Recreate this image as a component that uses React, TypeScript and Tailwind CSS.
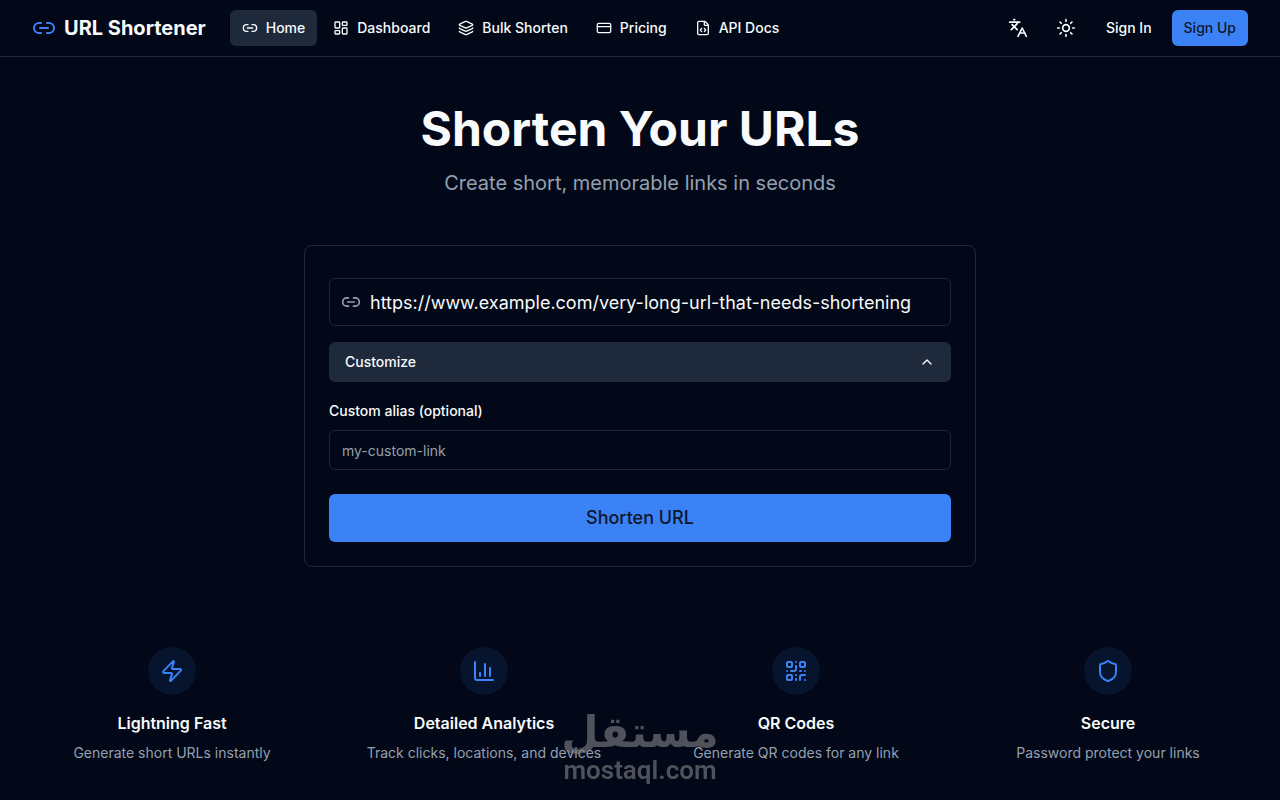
import { useState } from 'react';
import {
  ChartColumn,
  ChevronDown,
  ChevronUp,
  CreditCard,
  FileCode,
  Languages,
  Layers,
  LayoutDashboard,
  Link2,
  QrCode,
  Shield,
  Sun,
  Zap,
} from 'lucide-react';

const navItems = [
  { label: 'Home', icon: Link2 },
  { label: 'Dashboard', icon: LayoutDashboard },
  { label: 'Bulk Shorten', icon: Layers },
  { label: 'Pricing', icon: CreditCard },
  { label: 'API Docs', icon: FileCode },
];

const features = [
  { title: 'Lightning Fast', text: 'Generate short URLs instantly', icon: Zap },
  { title: 'Detailed Analytics', text: 'Track clicks, locations, and devices', icon: ChartColumn },
  { title: 'QR Codes', text: 'Generate QR codes for any link', icon: QrCode },
  { title: 'Secure', text: 'Password protect your links', icon: Shield },
];

function Header() {
  const [active, setActive] = useState('Home');

  return (
    <header className="border-b border-[#1e293b]">
      <div className="flex h-14 items-center justify-between px-8">
        <div className="flex items-center gap-6">
          <a href="#" className="flex items-center gap-2">
            <Link2 className="size-6 text-[#3b82f6]" />
            <span className="text-xl font-bold">URL Shortener</span>
          </a>
          <nav className="flex items-center gap-1">
            {navItems.map(({ label, icon: Icon }) => (
              <a
                key={label}
                href="#"
                onClick={() => setActive(label)}
                className={`flex h-9 items-center gap-2 rounded-md px-3 text-sm font-medium hover:bg-[#1e293b] ${
                  active === label ? 'bg-[#1e293b]' : ''
                }`}
              >
                <Icon className="size-4" />
                {label}
              </a>
            ))}
          </nav>
        </div>
        <div className="flex items-center gap-2">
          <button
            aria-label="Change language"
            className="flex size-10 items-center justify-center rounded-md hover:bg-[#1e293b]"
          >
            <Languages className="size-5" />
          </button>
          <button
            aria-label="Toggle theme"
            className="flex size-10 items-center justify-center rounded-md hover:bg-[#1e293b]"
          >
            <Sun className="size-5" />
          </button>
          <a href="#" className="flex h-9 items-center rounded-md px-3 text-sm font-medium hover:bg-[#1e293b]">
            Sign In
          </a>
          <a
            href="#"
            className="flex h-9 items-center rounded-md bg-[#3b82f6] px-3 text-sm font-medium text-[#0f172a]"
          >
            Sign Up
          </a>
        </div>
      </div>
    </header>
  );
}

function ShortenForm() {
  const [url, setUrl] = useState('https://www.example.com/very-long-url-that-needs-shortening');
  const [alias, setAlias] = useState('');
  const [open, setOpen] = useState(true);

  return (
    <form
      onSubmit={(e) => e.preventDefault()}
      className="mx-auto max-w-2xl rounded-lg border border-[#1e293b] px-6 pt-8 pb-6"
    >
      <div className="relative">
        <Link2 className="absolute top-1/2 left-3 size-5 -translate-y-1/2 text-[#94a0b0]" />
        <input
          type="url"
          aria-label="URL to shorten"
          value={url}
          onChange={(e) => setUrl(e.target.value)}
          className="block h-12 w-full rounded-md border border-[#1e293b] bg-transparent py-2 pr-3 pl-10 text-lg outline-none focus:border-[#3b82f6]"
        />
      </div>
      <button
        type="button"
        aria-expanded={open}
        onClick={() => setOpen(!open)}
        className="mt-4 flex h-10 w-full items-center justify-between rounded-md bg-[#1e293b] px-4 text-sm font-medium"
      >
        Customize
        {open ? <ChevronUp className="size-4" /> : <ChevronDown className="size-4" />}
      </button>
      {open && (
        <div className="mt-4">
          <div>
            <label htmlFor="alias" className="text-sm font-medium">
              Custom alias (optional)
            </label>
          </div>
          <input
            id="alias"
            type="text"
            placeholder="my-custom-link"
            value={alias}
            onChange={(e) => setAlias(e.target.value)}
            className="mt-2 block h-10 w-full rounded-md border border-[#1e293b] bg-transparent px-3 text-sm outline-none placeholder:text-[#94a0b0] focus:border-[#3b82f6]"
          />
        </div>
      )}
      <button
        type="submit"
        className="mt-6 block h-12 w-full rounded-md bg-[#3b82f6] text-lg font-medium text-[#0f172a]"
      >
        Shorten URL
      </button>
    </form>
  );
}

function Watermark() {
  return (
    <div className="pointer-events-none fixed inset-x-0 bottom-4 flex flex-col items-center text-[#848488] opacity-60">
      <span lang="ar" dir="rtl" className="font-['DejaVu_Sans',sans-serif] text-[43px]/12 font-bold">
        مستقل
      </span>
      <span className="font-['Roboto',sans-serif] text-[26px]/7 font-semibold">mostaql.com</span>
    </div>
  );
}

export default function App() {
  return (
    <div className="min-h-screen bg-[#020817] font-['Inter',sans-serif] text-[#f8fafc]">
      <Header />
      <main className="px-8 pt-12 pb-9">
        <div className="mb-12 text-center">
          <h1 className="mb-4 text-5xl font-bold">Shorten Your URLs</h1>
          <p className="text-xl text-[#94a0b0]">Create short, memorable links in seconds</p>
        </div>
        <ShortenForm />
        <section className="mt-20 grid grid-cols-2 gap-8 text-center md:grid-cols-4">
          {features.map(({ title, text, icon: Icon }) => (
            <div key={title} className="flex flex-col items-center">
              <div className="mb-4 flex size-12 items-center justify-center rounded-full bg-[#3b82f6]/10">
                <Icon className="size-6 text-[#3b82f6]" />
              </div>
              <h3 className="mb-2 font-semibold">{title}</h3>
              <p className="text-sm text-[#94a0b0]">{text}</p>
            </div>
          ))}
        </section>
      </main>
      <Watermark />
    </div>
  );
}
